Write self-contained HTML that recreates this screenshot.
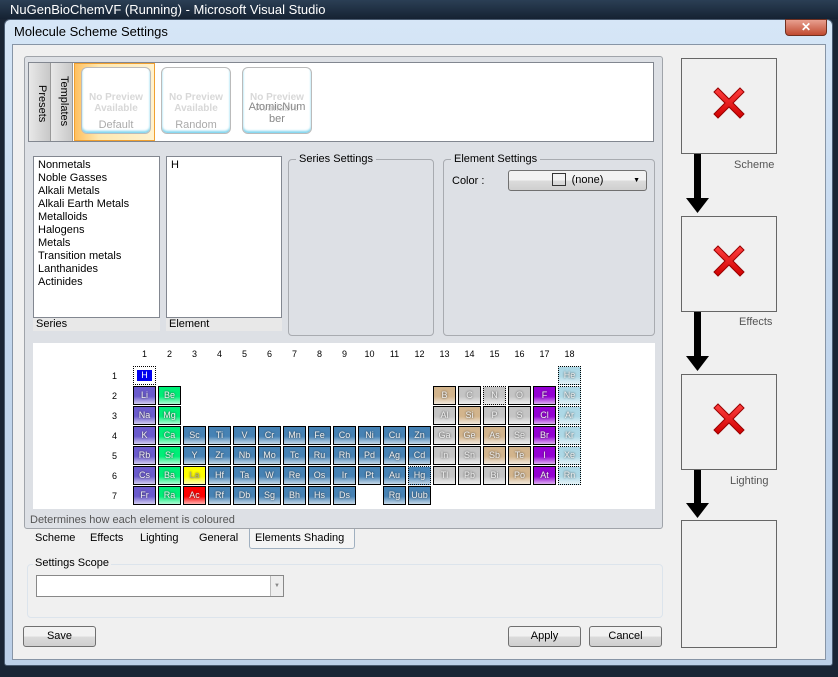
<!DOCTYPE html>
<html><head><meta charset="utf-8"><style>
*{box-sizing:border-box;margin:0;padding:0}
body{width:838px;height:677px;background:#1a2535;position:relative;overflow:hidden;font-family:"Liberation Sans",sans-serif;font-size:11px;color:#000}
.a{position:absolute}
.title{left:0;top:0;width:838px;height:19px;background:linear-gradient(#2b3f55,#152232);color:#fff;font-size:13px;padding:2px 0 0 10px}
.frame{left:4px;top:19px;width:829px;height:647px;background:linear-gradient(#d6e6f7,#c4d8ee 40%,#bcd0e8);border:1px solid #4a5b70;border-radius:6px 6px 3px 3px}
.client{left:12px;top:44px;width:814px;height:616px;background:#f0f0f0;border:1px solid #8795a6}
.box{background:#fff;border:1px solid #828790}
.panel{background:#dde0e5;border:1px solid #a0a4aa;border-radius:3px}
.grp{border:1px solid #a8abb0;border-radius:4px}
.grpt{background:#dde0e5;padding:0 3px}
.btn{border:1px solid #707070;border-radius:3px;background:linear-gradient(#f2f2f2 50%,#dcdcdc 50%,#cfcfcf);text-align:center;font-size:11px;line-height:18px}
.rbox{border:1px solid #666;background:#f0f0f0}
.cell{position:absolute;width:23px;height:19px;border:1px solid #000;color:#eee;font-size:9px;text-align:center;line-height:17px;text-shadow:0 0 2px #333}
.num{position:absolute;font-size:9px;width:23px;text-align:center}
.prev{position:absolute;top:67px;width:70px;height:67px;border:1px solid #bbb;border-radius:6px;background:#fff;box-shadow:inset 0 -2px 2px #7dd4ee;color:#d8d8d8;font-weight:bold;font-size:10px;text-align:center;padding-top:24px;line-height:11px}
.prev span{display:block;color:#aaa;font-weight:normal;font-size:11px;margin-top:5px;line-height:12px}
.lbl{color:#555}
</style></head><body>
<div class="a title">NuGenBioChemVF (Running) - Microsoft Visual Studio</div>
<div class="a frame"></div>
<div class="a" style="left:14px;top:24px;font-size:13px">Molecule Scheme Settings</div>
<div class="a" style="left:785px;top:19px;width:42px;height:17px;background:linear-gradient(#e8a090,#c04a30);border:1px solid #703020;border-radius:0 0 4px 4px;color:#fff;text-align:center;font-weight:bold;font-size:12px;line-height:15px">✕</div>
<div class="a client"></div>

<div class="a panel" style="left:24px;top:56px;width:639px;height:473px"></div>
<div class="a box" style="left:28px;top:62px;width:626px;height:80px"></div>
<div class="a" style="left:29px;top:63px;width:22px;height:78px;background:linear-gradient(90deg,#e8e8e8,#c8c8c8);border-right:1px solid #999"></div>
<div class="a" style="left:51px;top:63px;width:22px;height:78px;background:linear-gradient(90deg,#e8e8e8,#c8c8c8);border-right:1px solid #999"></div>
<div class="a" style="white-space:nowrap;font-size:11px;left:48px;top:85px;transform:rotate(90deg);transform-origin:left top">Presets</div>
<div class="a" style="white-space:nowrap;font-size:11px;left:70px;top:76px;transform:rotate(90deg);transform-origin:left top">Templates</div>
<div class="a" style="left:74px;top:63px;width:81px;height:78px;background:linear-gradient(90deg,#ffc060,#ffe8b0 30%,#fff2d0);border:1px solid #f0a030"></div>
<div class="prev" style="left:81px">No Preview<br>Available<span>Default</span></div>
<div class="prev" style="left:161px">No Preview<br>Available<span>Random</span></div>
<div class="prev" style="left:242px">No Preview<br>Available<span style="margin-top:-13px;color:#888">AtomicNum<br>ber</span></div>

<div class="a box" style="left:33px;top:156px;width:127px;height:162px;padding:2px 4px;line-height:13px">Nonmetals<br>Noble Gasses<br>Alkali Metals<br>Alkali Earth Metals<br>Metalloids<br>Halogens<br>Metals<br>Transition metals<br>Lanthanides<br>Actinides</div>
<div class="a" style="left:33px;top:318px;width:127px;height:13px;background:#e8e8e8;padding-left:3px">Series</div>
<div class="a box" style="left:166px;top:156px;width:116px;height:162px;padding:2px 4px">H</div>
<div class="a" style="left:166px;top:318px;width:116px;height:13px;background:#e8e8e8;padding-left:3px">Element</div>
<div class="a grp" style="left:288px;top:159px;width:146px;height:177px"></div>
<div class="a grpt" style="left:296px;top:153px">Series Settings</div>
<div class="a grp" style="left:443px;top:159px;width:212px;height:177px"></div>
<div class="a grpt" style="left:451px;top:153px">Element Settings</div>
<div class="a" style="left:452px;top:175px">Color :</div>
<div class="a btn" style="left:508px;top:170px;width:139px;height:21px;line-height:19px"><span style="display:inline-block;width:14px;height:13px;border:1px solid #333;vertical-align:-3px;margin-right:6px"></span>(none)<span style="position:absolute;right:6px;font-size:7px">▼</span></div>

<div class="a" style="left:33px;top:343px;width:622px;height:166px;background:#fff"></div>
<div id="pt"></div>
<div class="a lbl" style="left:30px;top:514px;font-size:11px">Determines how each element is coloured</div>

<div class="a" style="left:249px;top:529px;width:106px;height:20px;background:#f4f4f4;border:1px solid #a0b0c0;border-top:none;border-radius:0 0 3px 3px"></div>
<div class="a" style="left:35px;top:532px">Scheme</div>
<div class="a" style="left:90px;top:532px">Effects</div>
<div class="a" style="left:140px;top:532px">Lighting</div>
<div class="a" style="left:199px;top:532px">General</div>
<div class="a" style="left:255px;top:532px">Elements Shading</div>

<div class="a grp" style="left:27px;top:564px;width:636px;height:54px;border-color:#dce4ec"></div>
<div class="a" style="left:33px;top:557px;background:#f0f0f0;padding:0 2px">Settings Scope</div>
<div class="a" style="left:36px;top:575px;width:248px;height:22px;background:#fff;border:1px solid #888"></div>
<div class="a" style="left:270px;top:576px;width:13px;height:20px;background:#eee;border-left:1px solid #bbb;color:#888;font-size:6px;text-align:center;line-height:20px">▼</div>

<div class="a btn" style="left:23px;top:626px;width:73px;height:21px">Save</div>
<div class="a btn" style="left:508px;top:626px;width:73px;height:21px">Apply</div>
<div class="a btn" style="left:589px;top:626px;width:73px;height:21px">Cancel</div>

<div class="a rbox" style="left:681px;top:58px;width:96px;height:96px"></div>
<div class="a rbox" style="left:681px;top:216px;width:96px;height:96px"></div>
<div class="a rbox" style="left:681px;top:374px;width:96px;height:96px"></div>
<div class="a rbox" style="left:681px;top:520px;width:96px;height:128px"></div>
<svg class="a" style="left:0;top:0" width="838" height="677">
<defs><linearGradient id="rg" x1="0" y1="0" x2="0" y2="1"><stop offset="0" stop-color="#ff4040"/><stop offset="1" stop-color="#d00000"/></linearGradient></defs>
<g stroke="#900" stroke-width="1" fill="url(#rg)">
<path d="M714 92l4-4 11 11 11-11 4 4-11 11 11 11-4 4-11-11-11 11-4-4 11-11z"/>
<path d="M714 250l4-4 11 11 11-11 4 4-11 11 11 11-4 4-11-11-11 11-4-4 11-11z"/>
<path d="M714 408l4-4 11 11 11-11 4 4-11 11 11 11-4 4-11-11-11 11-4-4 11-11z"/>
</g>
<g fill="#000">
<rect x="694" y="154" width="7" height="44"/><path d="M686 198h23l-11.5 15z"/>
<rect x="694" y="312" width="7" height="44"/><path d="M686 356h23l-11.5 15z"/>
<rect x="694" y="470" width="7" height="34"/><path d="M686 503h23l-11.5 15z"/>
</g>
<g font-family="Liberation Sans" font-size="11" fill="#555">
<text x="734" y="168">Scheme</text><text x="739" y="325">Effects</text><text x="730" y="484">Lighting</text>
</g>
</svg>
<script>
var C={A:'#6a5acd',E:'#00ee77',T:'#4682b4',M:'#d2b48c',G:'#c4c4c4',H:'#9400d3',N:'#add8e6',L:'#ffff00',R:'#ff0000'};
var rows=[
[[1,'H','X'],[18,'He','N']],
[[1,'Li','A'],[2,'Be','E'],[13,'B','M'],[14,'C','G'],[15,'N','G'],[16,'O','G'],[17,'F','H'],[18,'Ne','N']],
[[1,'Na','A'],[2,'Mg','E'],[13,'Al','G'],[14,'Si','M'],[15,'P','G'],[16,'S','G'],[17,'Cl','H'],[18,'Ar','N']],
[[1,'K','A'],[2,'Ca','E'],[3,'Sc'],[4,'Ti'],[5,'V'],[6,'Cr'],[7,'Mn'],[8,'Fe'],[9,'Co'],[10,'Ni'],[11,'Cu'],[12,'Zn'],[13,'Ga','G'],[14,'Ge','M'],[15,'As','M'],[16,'Se','G'],[17,'Br','H'],[18,'Kr','N']],
[[1,'Rb','A'],[2,'Sr','E'],[3,'Y'],[4,'Zr'],[5,'Nb'],[6,'Mo'],[7,'Tc'],[8,'Ru'],[9,'Rh'],[10,'Pd'],[11,'Ag'],[12,'Cd'],[13,'In','G'],[14,'Sn','G'],[15,'Sb','M'],[16,'Te','M'],[17,'I','H'],[18,'Xe','N']],
[[1,'Cs','A'],[2,'Ba','E'],[3,'La','L'],[4,'Hf'],[5,'Ta'],[6,'W'],[7,'Re'],[8,'Os'],[9,'Ir'],[10,'Pt'],[11,'Au'],[12,'Hg'],[13,'Tl','G'],[14,'Pb','G'],[15,'Bi','G'],[16,'Po','M'],[17,'At','H'],[18,'Rn','N']],
[[1,'Fr','A'],[2,'Ra','E'],[3,'Ac','R'],[4,'Rf'],[5,'Db'],[6,'Sg'],[7,'Bh'],[8,'Hs'],[9,'Ds'],[11,'Rg'],[12,'Uub']]];
var h='';
for(var c=1;c<=18;c++)h+='<div class="num" style="left:'+(133+(c-1)*25)+'px;top:349px">'+c+'</div>';
for(var r=0;r<7;r++){h+='<div class="num" style="left:103px;top:'+(371+r*20)+'px">'+(r+1)+'</div>';
rows[r].forEach(function(e){var x=133+(e[0]-1)*25,y=366+r*20,k=e[2]||'T';
if(k=='X'){h+='<div class="cell" style="left:'+x+'px;top:'+y+'px;border:1px dotted #000;background:#fff;text-shadow:none"><div style="margin:3px;height:11px;background:#0000ee;line-height:11px;color:#fff">H</div></div>';return;}
var col=C[k];var dot=(e[1]=='N'||e[1]=='Hg'||k=='N')?'border-style:dotted;':'';
var tc=(k=='L')?'#aa8':'#eee';
h+='<div class="cell" style="left:'+x+'px;top:'+y+'px;'+dot+'color:'+tc+';background:linear-gradient('+col+' 55%,#fff 120%)">'+e[1]+'</div>';});}
document.getElementById('pt').innerHTML=h;
</script>
</body></html>
